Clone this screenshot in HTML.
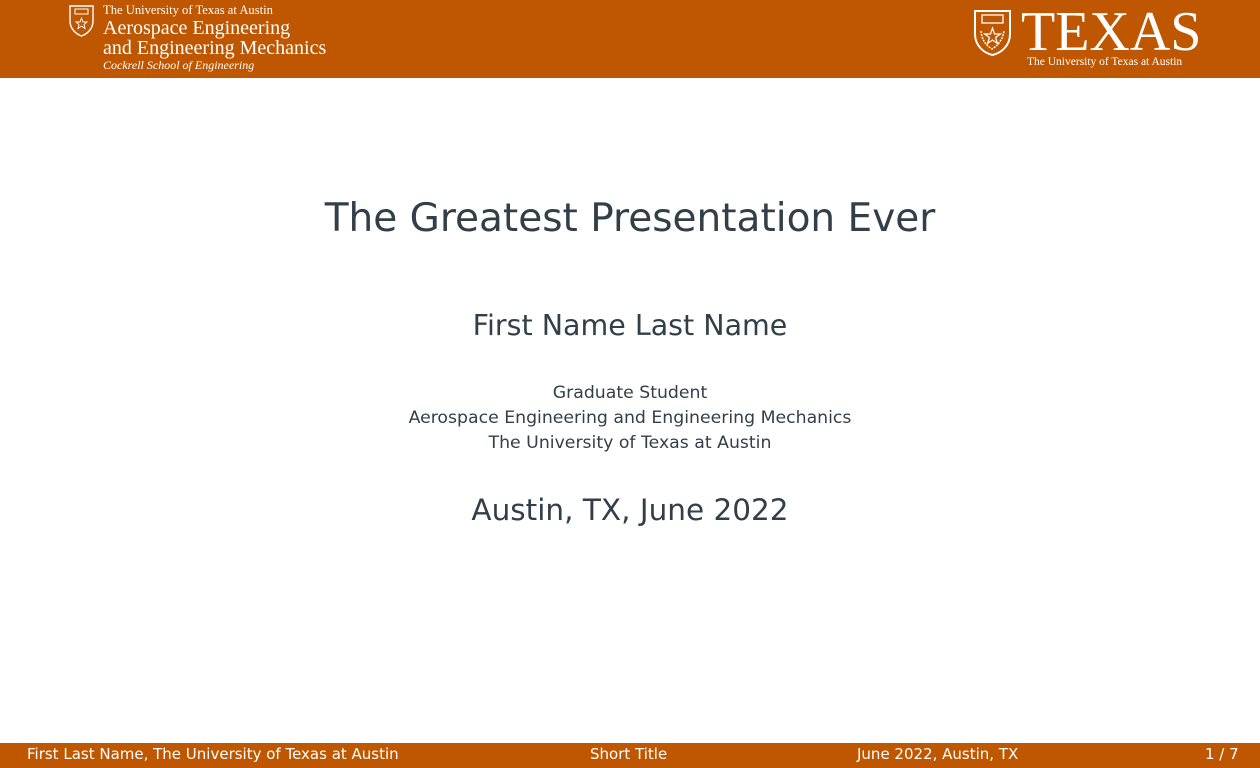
<!DOCTYPE html>
<html><head><meta charset="utf-8"><style>
*{margin:0;padding:0;box-sizing:border-box}
body{width:1260px;height:768px;background:#fff;position:relative;overflow:hidden;font-family:"DejaVu Sans","Liberation Sans",sans-serif;color:#333f48}
.hdr{position:absolute;left:0;top:0;width:1260px;height:78px;background:#bf5700}
.ftr{position:absolute;left:0;top:743px;width:1260px;height:25px;background:#bf5700;color:#fff;font-size:15px}
.ftr span{position:absolute;top:2px;white-space:nowrap}
.serif{font-family:"Liberation Serif",serif;color:#fff;position:absolute;white-space:nowrap}
.c{position:absolute;left:0;width:1260px;text-align:center;white-space:nowrap}
</style></head><body>
<div class="hdr">
<svg style="position:absolute;left:69px;top:5px" width="25" height="32" viewBox="0 0 25 32"><path d="M1 1H24V16C24 24 18 29 12.5 31C7 29 1 24 1 16Z" fill="none" stroke="#fff" stroke-width="1.4"/><rect x="6" y="4" width="13" height="5" fill="none" stroke="#fff"/><path d="M12.5 13L14 17H18L15 19.5L16 23.5L12.5 21L9 23.5L10 19.5L7 17H11Z" fill="none" stroke="#fff" stroke-width="0.9"/></svg>
<div class="serif" style="left:103px;top:3px;font-size:12.6px">The University of Texas at Austin</div>
<div class="serif" style="left:103px;top:17px;font-size:20px">Aerospace Engineering</div>
<div class="serif" style="left:103px;top:37px;font-size:20px">and Engineering Mechanics</div>
<div class="serif" style="left:103px;top:58px;font-size:12px;font-style:italic">Cockrell School of Engineering</div>
<svg style="position:absolute;left:973px;top:9px" width="39" height="48" viewBox="0 0 39 48"><path d="M2 2H37V25C37 37 28 44 19.5 46C11 44 2 37 2 25Z" fill="none" stroke="#fff" stroke-width="2"/><rect x="9" y="6" width="21" height="8" fill="none" stroke="#fff" stroke-width="1.3"/><path d="M19.5 19L21.5 25H27.5L22.5 28.5L24.5 34.5L19.5 31L14.5 34.5L16.5 28.5L11.5 25H17.5Z" fill="none" stroke="#fff" stroke-width="1.2"/><path d="M8 22Q9 34 19 40Q29 34 31 22" fill="none" stroke="#fff" stroke-width="1.5" stroke-dasharray="2 1"/></svg>
<div class="serif" style="left:1021px;top:2px;font-size:56px;line-height:60px">TEXAS</div>
<div class="serif" style="left:1027px;top:56px;font-size:11.5px">The University of Texas at Austin</div>
</div>
<div class="c" style="top:196px;font-size:39px">The Greatest Presentation Ever</div>
<div class="c" style="top:309px;font-size:28.5px">First Name Last Name</div>
<div class="c" style="top:381px;font-size:17.3px;line-height:25px">Graduate Student<br>Aerospace Engineering and Engineering Mechanics<br>The University of Texas at Austin</div>
<div class="c" style="top:493px;font-size:29.5px">Austin, TX, June 2022</div>
<div class="ftr">
<span style="left:27px">First Last Name, The University of Texas at Austin</span>
<span style="left:590px">Short Title</span>
<span style="left:857px">June 2022, Austin, TX</span>
<span style="left:1205px">1 / 7</span>
</div>
</body></html>
